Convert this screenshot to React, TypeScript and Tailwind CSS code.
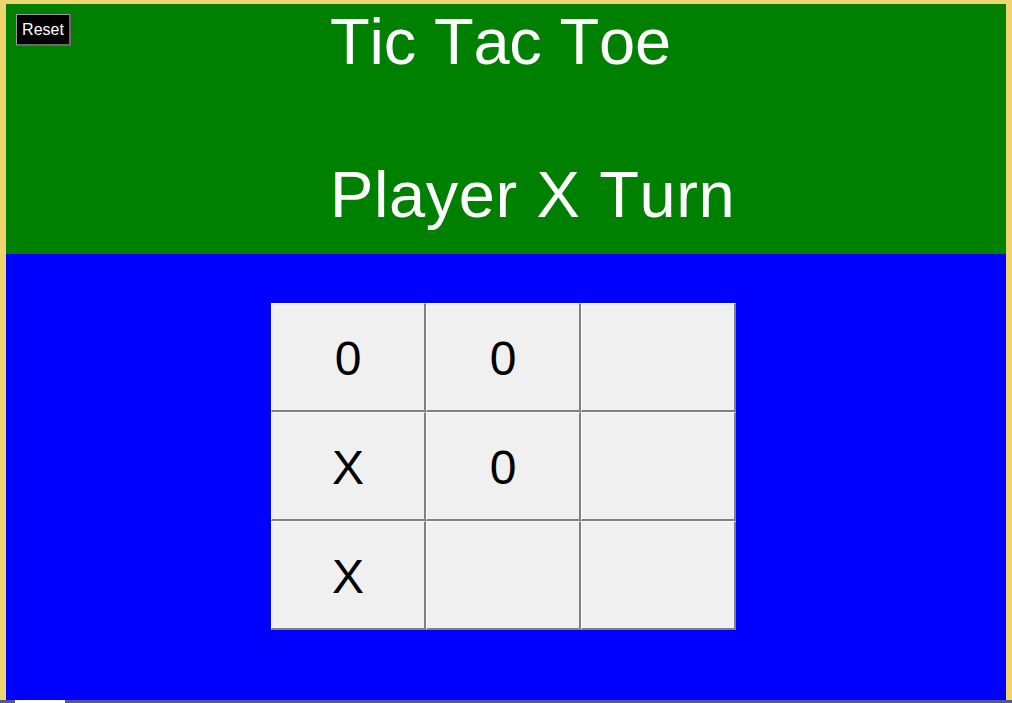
import React, { useState } from 'react';

const initialBoard = ['0', '0', '', 'X', '0', '', 'X', '', ''];

const App: React.FC = () => {
  const [board, setBoard] = useState<string[]>(initialBoard);
  const [player, setPlayer] = useState<'X' | '0'>('X');

  const play = (i: number) => {
    if (board[i]) return;
    const next = [...board];
    next[i] = player;
    setBoard(next);
    setPlayer(player === 'X' ? '0' : 'X');
  };

  const reset = () => {
    setBoard(Array(9).fill(''));
    setPlayer('X');
  };

  return (
    <div className="w-[1012px] h-[703px] flex flex-col bg-[#efd46f] font-['Liberation_Sans',Arial,sans-serif] [font-kerning:none] overflow-hidden">
      <div className="flex-1 flex flex-col pt-[4px] px-[6px] min-h-0">
        <header className="relative h-[250px] bg-[#008000] text-white flex flex-col pl-[324px] pt-[1px] gap-[79px]">
          <button
            onClick={reset}
            className="absolute left-[10px] top-[10px] w-[55px] h-[32px] bg-black text-white text-[16px] leading-none border border-t-[#9a9a9a] border-l-[#9a9a9a] border-r-2 border-b-2 border-r-[#6a6a6a] border-b-[#6a6a6a]"
          >
            Reset
          </button>
          <h1 className="text-[65px] leading-[74px] font-normal tracking-[-0.2px]">Tic Tac Toe</h1>
          <h2 className="text-[65px] leading-[74px] font-normal tracking-[0.6px]">Player {player} Turn</h2>
        </header>

        <main className="flex-1 bg-[#0000ff] pt-[49px] pl-[265px]">
          <div className="grid grid-cols-[155px_155px_155px] w-[465px]">
            {board.map((cell, i) => (
              <button
                key={i}
                onClick={() => play(i)}
                className="h-[109px] bg-[#f0f0f0] text-black text-[48px] leading-none flex items-center justify-center pt-[4px] border-t border-l border-t-[#fcfcfc] border-l-[#fcfcfc] border-r-2 border-b-2 border-r-[#808080] border-b-[#808080]"
              >
                {cell}
              </button>
            ))}
          </div>
        </main>
      </div>
      <div className="h-[3px] bg-[#56578f] flex items-stretch">
        <div className="ml-[15px] w-[50px] bg-white" />
      </div>
    </div>
  );
};

export default App;
